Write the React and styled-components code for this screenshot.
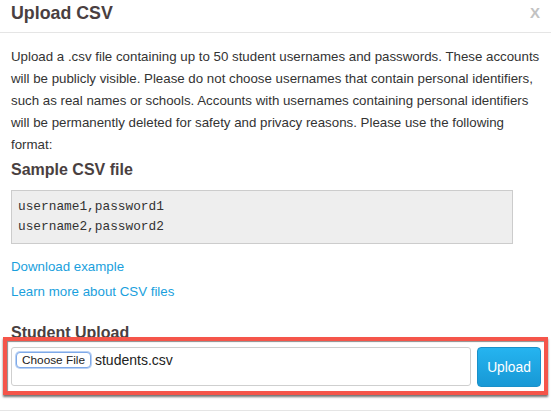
import React from 'react';
import styled, { createGlobalStyle } from 'styled-components';

const GlobalStyle = createGlobalStyle`
  html, body {
    margin: 0;
    padding: 0;
    background: #fff;
  }
  body {
    font-family: "Liberation Sans", Arial, Helvetica, sans-serif;
    color: #333;
  }
`;

const Modal = styled.div`
  width: 551px;
  height: 413px;
  overflow: hidden;
  background: #fff;
`;

const Header = styled.div`
  height: 33px;
  box-sizing: border-box;
  padding: 3px 11px 0;
  border-bottom: 1px solid #e5e5e5;
  display: flex;
  justify-content: space-between;
  align-items: flex-start;
`;

const Title = styled.h3`
  margin: 0;
  font-size: 17.8px;
  line-height: 20px;
  font-weight: bold;
  color: #4a3f41;
`;

const Close = styled.span`
  font-size: 15px;
  line-height: 20px;
  font-weight: bold;
  color: #c2c2c2;
  margin-right: 0;
`;

const Body = styled.div`
  padding: 13px 10px 0 11px;
`;

const Text = styled.p`
  margin: 0;
  font-size: 13.3px;
  line-height: 22px;
  color: #333;
`;

const Heading = styled.h4`
  margin: ${(p) => p.$top || 0}px 0 0;
  font-size: 16px;
  line-height: 20px;
  font-weight: bold;
  color: #4a3f41;
`;

const Sample = styled.pre`
  margin: 10px 0 0;
  width: 502px;
  box-sizing: border-box;
  padding: 6px 6px;
  background: #eeeeee;
  border: 1px solid #cccccc;
  font-family: "Liberation Mono", "Courier New", monospace;
  font-size: 12.8px;
  line-height: 20px;
  color: #333;
`;

const Links = styled.div`
  margin-top: 10px;
  display: flex;
  flex-direction: column;
`;

const Link = styled.a`
  font-size: 13.3px;
  line-height: 25px;
  color: #1a9fdd;
  text-decoration: none;
`;

const Highlight = styled.div`
  position: relative;
  margin: -6px -7px 0 -8px;
  border: 4px solid #f5554a;
  padding: 6px 3px 4px 4px;
  background: #fff;
  box-shadow: 0 2px 2px rgba(0, 0, 0, 0.55), inset 1px 1px 1px rgba(0, 0, 0, 0.45);
`;

const UploadRow = styled.div`
  display: flex;
  align-items: flex-start;
  gap: 6px;
`;

const FileBox = styled.div`
  flex: 1;
  height: 39px;
  box-sizing: border-box;
  border: 1px solid #cfcfcf;
  border-radius: 3px;
  padding: 4px 4px;
  display: flex;
  align-items: flex-start;
  gap: 4px;
`;

const ChooseButton = styled.button`
  height: 16px;
  padding: 0 5px;
  border: 1px solid #7ea9e8;
  border-radius: 4px;
  background: #fff;
  box-shadow: 0 0 0 1px #b9d1f4;
  font-family: "Liberation Sans", Arial, sans-serif;
  font-size: 11.8px;
  line-height: 14px;
  color: #222;
`;

const FileName = styled.span`
  font-size: 14px;
  line-height: 16px;
  color: #222;
`;

const UploadButton = styled.button`
  width: 64px;
  height: 40px;
  border: 1px solid #1a90c9;
  border-radius: 4px;
  background: linear-gradient(#25b4f0, #1898d5);
  color: #fff;
  font-family: "Liberation Sans", Arial, sans-serif;
  font-size: 13.8px;
  padding: 0;
`;

const Footer = styled.div`
  margin-top: 15px;
  border-top: 1px solid #e5e5e5;
`;

export default function App() {
  return (
    <>
      <GlobalStyle />
      <Modal>
        <Header>
          <Title>Upload CSV</Title>
          <Close>X</Close>
        </Header>
        <Body>
          <Text>
            Upload a .csv file containing up to 50 student usernames and passwords. These accounts
            will be publicly visible. Please do not choose usernames that contain personal
            identifiers, such as real names or schools. Accounts with usernames containing personal
            identifiers will be permanently deleted for safety and privacy reasons. Please use the
            following format:
          </Text>
          <Heading $top={4}>Sample CSV file</Heading>
          <Sample>
            {'username1,password1\nusername2,password2'}
          </Sample>
          <Links>
            <Link href="#">Download example</Link>
            <Link href="#">Learn more about CSV files</Link>
          </Links>
          <Heading $top={19}>Student Upload</Heading>
          <Highlight>
            <UploadRow>
              <FileBox>
                <ChooseButton>Choose File</ChooseButton>
                <FileName>students.csv</FileName>
              </FileBox>
              <UploadButton>Upload</UploadButton>
            </UploadRow>
          </Highlight>
        </Body>
        <Footer />
      </Modal>
    </>
  );
}
